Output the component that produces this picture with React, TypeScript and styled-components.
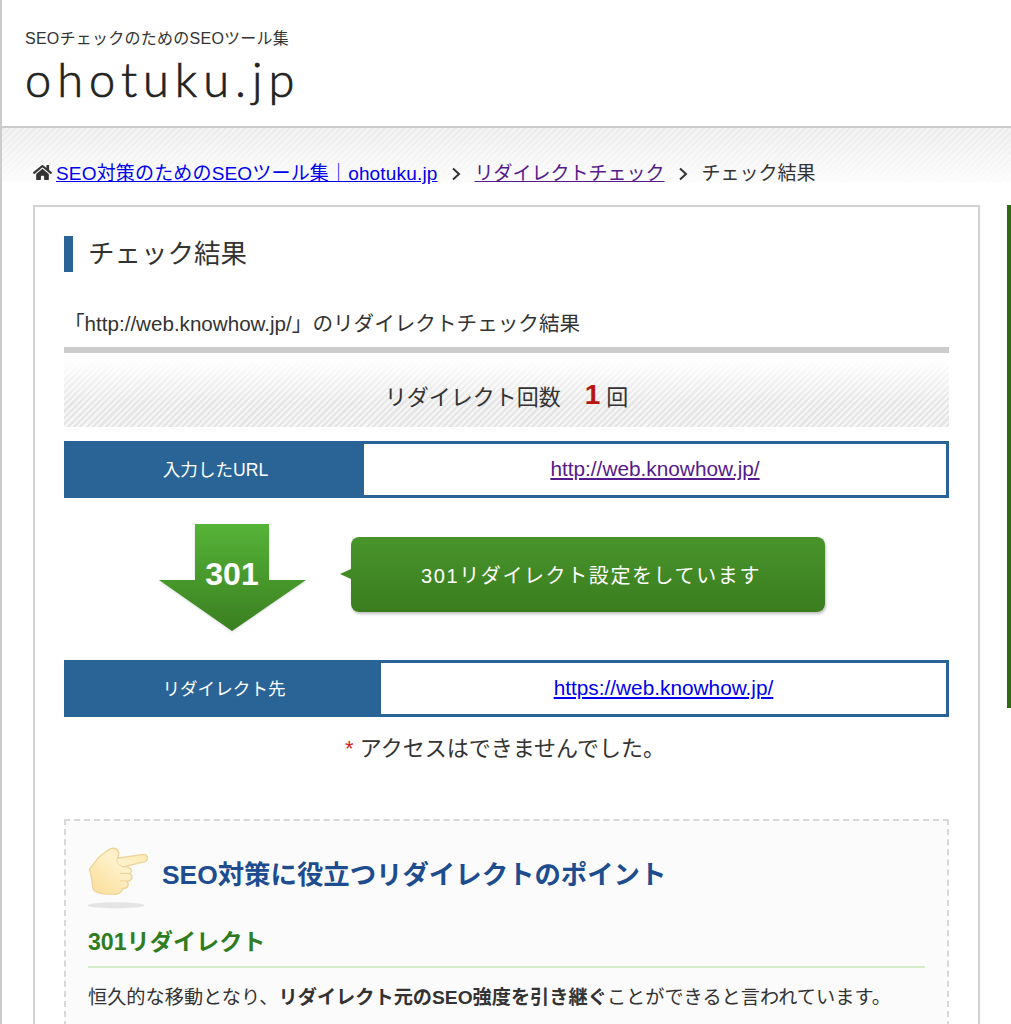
import React from "react";
import styled, { createGlobalStyle } from "styled-components";
import { FaHome } from "react-icons/fa";

const Global = createGlobalStyle`
  html, body { margin: 0; padding: 0; background: #fff; }
  body { width: 1011px; height: 1024px; overflow: hidden; font-family: "Liberation Sans", "Noto Sans CJK JP", sans-serif; color: #333; }
  a { color: #0000ee; }
`;

const Page = styled.div`
  width: 1011px;
  height: 1024px;
  overflow: hidden;
  box-sizing: border-box;
  border-left: 2px solid #ccc;
`;

const Header = styled.header`
  height: 128px;
  box-sizing: border-box;
  padding: 29px 0 0 23px;
  border-bottom: 2px solid #ccc;
`;

const Tagline = styled.div`
  font-size: 16px;
  line-height: 20px;
  letter-spacing: 0.25px;
  color: #333;
`;

const Logo = styled.div`
  font-family: "Lato", sans-serif;
  font-weight: 300;
  font-size: 47px;
  line-height: 50px;
  letter-spacing: 6px;
  color: #222;
  margin-top: 5px;
  -webkit-text-stroke: 0.7px #222;
`;

const Crumbs = styled.nav`
  height: 77px;
  box-sizing: border-box;
  padding: 34px 0 0 31px;
  display: flex;
  align-items: flex-start;
  font-size: 19px;
  line-height: 24px;
  background:
    linear-gradient(to bottom, rgba(255, 255, 255, 0.1), rgba(255, 255, 255, 0.85)) top / 100% 54px no-repeat,
    repeating-linear-gradient(135deg, #e9e9e9 0, #e9e9e9 2.25px, #f1f1f1 2.25px, #f1f1f1 4.5px) top / 100% 54px no-repeat;
`;

const HomeIcon = styled(FaHome)`
  width: 19px;
  height: 17px;
  margin: 2px 4px 0 0;
  color: #333;
  flex: none;
`;

const Sep = styled.svg`
  width: 10px;
  height: 14px;
  margin: 5px 14px 0 13px;
  fill: none;
  stroke: #333;
  stroke-width: 2;
  flex: none;
`;

const CrumbLink = styled.a<{ $visited?: boolean; $ls?: number }>`
  color: ${(p) => (p.$visited ? "#551a8b" : "#0000ee")};
  letter-spacing: ${(p) => p.$ls ?? 0}px;
`;

const Main = styled.div`
  display: flex;
  align-items: flex-start;
  padding-left: 31px;
`;

const Card = styled.main`
  width: 947px;
  box-sizing: border-box;
  border: 2px solid #d2d2d2;
  padding: 29px 29px 40px 29px;
  flex: none;
`;

const SideBar = styled.div`
  width: 4px;
  height: 503px;
  margin-left: 27px;
  background: #2f6b14;
  flex: none;
`;

const Title = styled.h1`
  margin: 0;
  height: 36px;
  border-left: 9px solid #2a6496;
  padding-left: 15px;
  font-size: 26.5px;
  line-height: 36px;
  font-weight: 400;
  color: #333;
`;

const Lead = styled.p`
  margin: 0;
  padding: 35px 0 0 0;
  height: 40px;
  border-bottom: 6px solid #ccc;
  font-size: 20.6px;
  line-height: 33px;
  color: #333;
`;

const Count = styled.div`
  height: 68px;
  box-sizing: border-box;
  padding-top: 3px;
  margin-top: 6px;
  display: flex;
  align-items: center;
  justify-content: center;
  font-size: 22px;
  color: #333;
  background:
    linear-gradient(to bottom, #fff 0, rgba(255, 255, 255, 0) 44px),
    repeating-linear-gradient(135deg, #e6e6e6 0, #e6e6e6 2.25px, #f5f5f5 2.25px, #f5f5f5 4.5px);
`;

const CountNum = styled.strong`
  color: #b5160f;
  font-size: 28px;
  margin: 0 6px 0 24px;
`;

const UrlRow = styled.div<{ $top: number }>`
  margin-top: ${(p) => p.$top}px;
  height: 57px;
  box-sizing: border-box;
  border: 3px solid #2a6496;
  display: flex;
  font-size: 20.8px;
`;

const UrlLabel = styled.div<{ $w: number }>`
  width: ${(p) => p.$w}px;
  flex: none;
  background: #2a6496;
  color: #fff;
  font-size: 17.6px;
  padding-bottom: 3px;
  box-sizing: border-box;
  display: flex;
  align-items: center;
  justify-content: center;
`;

const UrlValue = styled.div`
  flex: 1;
  display: flex;
  align-items: center;
  justify-content: center;
  padding-bottom: 2px;
`;

const Banner = styled.div`
  height: 162px;
  display: flex;
  padding: 26px 0 0 94px;
  box-sizing: border-box;
`;

const ArrowBox = styled.div`
  position: relative;
  width: 148px;
  height: 108px;
  flex: none;
`;

const ArrowShape = styled.svg`
  display: block;
  filter: drop-shadow(0 1px 1px rgba(0, 0, 0, 0.15));
`;

const ArrowText = styled.span`
  position: absolute;
  left: 0;
  right: 0;
  top: 30px;
  text-align: center;
  font-size: 32px;
  line-height: 40px;
  font-weight: 700;
  color: #fff;
`;

const Bubble = styled.div`
  position: relative;
  margin: 13px 0 0 45px;
  width: 474px;
  height: 75px;
  padding-left: 6px;
  box-sizing: border-box;
  border-radius: 8px;
  background: linear-gradient(to bottom, #48942b, #3a7d1f);
  box-shadow: 1px 2px 3px rgba(0, 0, 0, 0.25);
  color: #fff;
  font-size: 20px;
  letter-spacing: 1.6px;
  display: flex;
  align-items: center;
  justify-content: center;
  &::before {
    content: "";
    position: absolute;
    left: -11px;
    top: 32px;
    border-top: 5px solid transparent;
    border-bottom: 5px solid transparent;
    border-right: 11px solid #428a26;
  }
`;

const Note = styled.p`
  margin: 17px 0 0;
  padding-right: 3px;
  text-align: center;
  font-size: 22px;
  line-height: 30px;
  color: #333;
`;

const Star = styled.span`
  color: #c8281e;
`;

const Points = styled.section`
  margin-top: 55px;
  border: 2px dashed #d8d8d8;
  background: #fbfbfb;
  padding: 26px 22px 40px 22px;
  height: 300px;
`;

const PointsHead = styled.div`
  display: flex;
  align-items: flex-start;
`;

const Hand = styled.svg`
  width: 62px;
  height: 63px;
  margin-top: -1px;
  margin-bottom: 1px;
  flex: none;
`;

const PointsTitle = styled.h2`
  margin: 11px 0 0 12px;
  font-size: 26.4px;
  line-height: 34px;
  font-weight: 700;
  color: #1e4d8f;
`;

const SubTitle = styled.h3`
  margin: 16px 0 0;
  height: 40px;
  font-size: 23.15px;
  line-height: 32px;
  font-weight: 700;
  color: #2f7d1e;
  border-bottom: 2px solid #d4ecc8;
`;

const Body = styled.p`
  margin: 14px 0 0;
  font-size: 19.2px;
  line-height: 32px;
  color: #333;
`;

const chevron = "M2 1.5 L8 7 L2 12.5";

export default function App() {
  return (
    <Page>
      <Global />
      <Header>
        <Tagline>SEOチェックのためのSEOツール集</Tagline>
        <Logo>ohotuku.jp</Logo>
      </Header>
      <Crumbs>
        <HomeIcon />
        <CrumbLink href="#" $ls={0.17}>SEO対策のためのSEOツール集｜ohotuku.jp</CrumbLink>
        <Sep viewBox="0 0 10 14"><path d={chevron} /></Sep>
        <CrumbLink href="#" $visited>リダイレクトチェック</CrumbLink>
        <Sep viewBox="0 0 10 14"><path d={chevron} /></Sep>
        <span>チェック結果</span>
      </Crumbs>
      <Main>
        <Card>
          <Title>チェック結果</Title>
          <Lead>「http://web.knowhow.jp/」のリダイレクトチェック結果</Lead>
          <Count>リダイレクト回数<CountNum>1</CountNum>回</Count>
          <UrlRow $top={14}>
            <UrlLabel $w={297}>入力したURL</UrlLabel>
            <UrlValue><CrumbLink href="#" $visited>http://web.knowhow.jp/</CrumbLink></UrlValue>
          </UrlRow>
          <Banner>
            <ArrowBox>
              <ArrowShape width="148" height="108" viewBox="0 0 148 108">
                <defs>
                  <linearGradient id="arrowFill" x1="0" y1="0" x2="0" y2="1">
                    <stop offset="0" stopColor="#55b337" />
                    <stop offset="1" stopColor="#3a7f20" />
                  </linearGradient>
                </defs>
                <path d="M37 0 H111 V56 H148 L74 107 L1 56 H37 Z" fill="url(#arrowFill)" />
              </ArrowShape>
              <ArrowText>301</ArrowText>
            </ArrowBox>
            <Bubble>301リダイレクト設定をしています</Bubble>
          </Banner>
          <UrlRow $top={0}>
            <UrlLabel $w={314}>リダイレクト先</UrlLabel>
            <UrlValue><CrumbLink href="#">https://web.knowhow.jp/</CrumbLink></UrlValue>
          </UrlRow>
          <Note><Star>*</Star> アクセスはできませんでした。</Note>
          <Points>
            <PointsHead>
              <Hand viewBox="24 15 186 190">
                <defs>
                  <linearGradient id="handFill" x1="0" y1="1" x2="1" y2="0">
                    <stop offset="0" stopColor="#fbdc95" />
                    <stop offset="0.6" stopColor="#fef2cc" />
                    <stop offset="1" stopColor="#fde6ac" />
                  </linearGradient>
                </defs>
                <ellipse cx="108" cy="194" rx="86" ry="9" fill="#e4e4e4" />
                <path
                  d="M28 85 L55 50 C70 38 82 26 95 22 C110 20 122 30 113 52 L190 40 C204 40 208 56 195 62 L130 78 C150 74 163 90 148 98 C162 102 158 120 140 122 C150 130 144 144 128 143 C126 156 112 162 100 161 L75 160 C60 158 45 156 40 146 C36 135 36 125 35 115 Z"
                  fill="url(#handFill)"
                  stroke="#eed39a"
                  strokeWidth="4"
                  strokeLinejoin="round"
                />
                <path d="M113 52 C108 62 112 72 130 78 M122 98 H148 M120 120 H140" fill="none" stroke="#eed39a" strokeWidth="3" strokeLinecap="round" />
              </Hand>
              <PointsTitle>SEO対策に役立つリダイレクトのポイント</PointsTitle>
            </PointsHead>
            <SubTitle>301リダイレクト</SubTitle>
            <Body>恒久的な移動となり、<strong>リダイレクト元のSEO強度を引き継ぐ</strong>ことができると言われています。</Body>
          </Points>
        </Card>
        <SideBar />
      </Main>
    </Page>
  );
}
